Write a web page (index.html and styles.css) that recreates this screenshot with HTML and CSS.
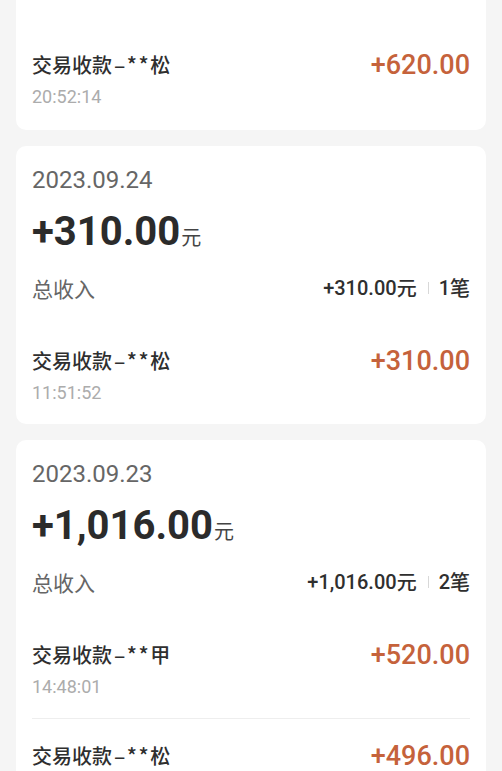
FILE: index.html
```html
<!DOCTYPE html>
<html lang="zh-CN">
<head>
<meta charset="utf-8">
<title>收入明细</title>
<link rel="stylesheet" href="styles.css">
</head>
<body>
<div class="list">
  <section class="card card--cut">
    <div class="tx tx--first">
      <div class="tx-info">
        <div class="tx-title">交易收款<span class="mask">–**</span>松</div>
        <div class="tx-time">20:52:14</div>
      </div>
      <div class="tx-amount">+620.00</div>
    </div>
  </section>

  <section class="card">
    <header class="day">
      <div class="day-date">2023.09.24</div>
      <div class="day-total"><span class="day-total-num">+310.00</span><span class="day-total-unit">元</span></div>
      <div class="day-sum">
        <span class="day-sum-label">总收入</span>
        <span class="day-sum-right"><span class="num">+310.00</span>元<i class="sep"></i><span class="num">1</span>笔</span>
      </div>
    </header>
    <div class="tx">
      <div class="tx-info">
        <div class="tx-title">交易收款<span class="mask">–**</span>松</div>
        <div class="tx-time">11:51:52</div>
      </div>
      <div class="tx-amount">+310.00</div>
    </div>
  </section>

  <section class="card">
    <header class="day">
      <div class="day-date">2023.09.23</div>
      <div class="day-total"><span class="day-total-num">+1,016.00</span><span class="day-total-unit">元</span></div>
      <div class="day-sum">
        <span class="day-sum-label">总收入</span>
        <span class="day-sum-right"><span class="num">+1,016.00</span>元<i class="sep"></i><span class="num">2</span>笔</span>
      </div>
    </header>
    <div class="tx">
      <div class="tx-info">
        <div class="tx-title">交易收款<span class="mask">–**</span>甲</div>
        <div class="tx-time">14:48:01</div>
      </div>
      <div class="tx-amount">+520.00</div>
    </div>
    <div class="tx tx--divided">
      <div class="tx-info">
        <div class="tx-title">交易收款<span class="mask">–**</span>松</div>
      </div>
      <div class="tx-amount">+496.00</div>
    </div>
  </section>
</div>
</body>
</html>
```

FILE: styles.css
```css
html, body {
  margin: 0;
  padding: 0;
  background: #f5f5f5;
}

body {
  font-family: Roboto, "Noto Sans CJK SC", sans-serif;
  color: #2f2f2f;
  overflow: hidden;
  height: 771px;
}

.list {
  display: flex;
  flex-direction: column;
  gap: 16px;
  padding: 0 16px;
}

.card {
  background: #ffffff;
  border-radius: 10px;
  padding: 0 16px;
}

.card--cut {
  border-top-left-radius: 0;
  border-top-right-radius: 0;
}

.day {
  padding: 17px 0 22px;
}

.day-date {
  font-size: 24px;
  line-height: 34px;
  color: #666666;
  font-weight: 400;
}

.day-total {
  margin-top: 11px;
  line-height: 48px;
  display: flex;
  align-items: baseline;
}

.day-total-num {
  font-size: 40px;
  font-weight: 700;
  color: #2b2b2b;
}

.day-total-unit {
  font-family: "Noto Sans CJK SC", sans-serif;
  font-size: 20px;
  color: #444444;
  margin-left: 1px;
}

.day-sum {
  margin-top: 12px;
  display: flex;
  justify-content: space-between;
  align-items: center;
  line-height: 30px;
}

.day-sum-label {
  font-family: "Noto Sans CJK SC", sans-serif;
  font-size: 21px;
  color: #666666;
}

.day-sum-right {
  display: flex;
  align-items: center;
  font-family: "Noto Sans CJK SC", sans-serif;
  font-size: 20px;
  font-weight: 500;
  color: #2f2f2f;
}

.day-sum-right .num {
  font-family: Roboto, sans-serif;
  font-weight: 500;
}

.sep {
  display: inline-block;
  width: 1px;
  height: 12px;
  background: #d8d8d8;
  margin: 0 10px 0 11px;
}

.tx {
  display: flex;
  justify-content: space-between;
  align-items: flex-start;
  padding: 21px 0 19px;
}

.tx--first {
  padding-top: 50px;
  padding-bottom: 21px;
}

.tx--divided {
  border-top: 1px solid #eeeeee;
  padding-top: 22px;
}

.tx-title {
  font-family: "Noto Sans CJK SC", sans-serif;
  font-size: 20px;
  font-weight: 500;
  line-height: 28px;
  color: #2f2f2f;
}

.mask {
  font-size: 21px;
  letter-spacing: 1.5px;
  margin-left: 2px;
}

.tx-time {
  margin-top: 6px;
  font-size: 18px;
  line-height: 24px;
  color: #acacac;
}

.tx-amount {
  font-size: 27px;
  font-weight: 500;
  line-height: 28px;
  color: #c5623b;
  margin-top: 1px;
}
```
